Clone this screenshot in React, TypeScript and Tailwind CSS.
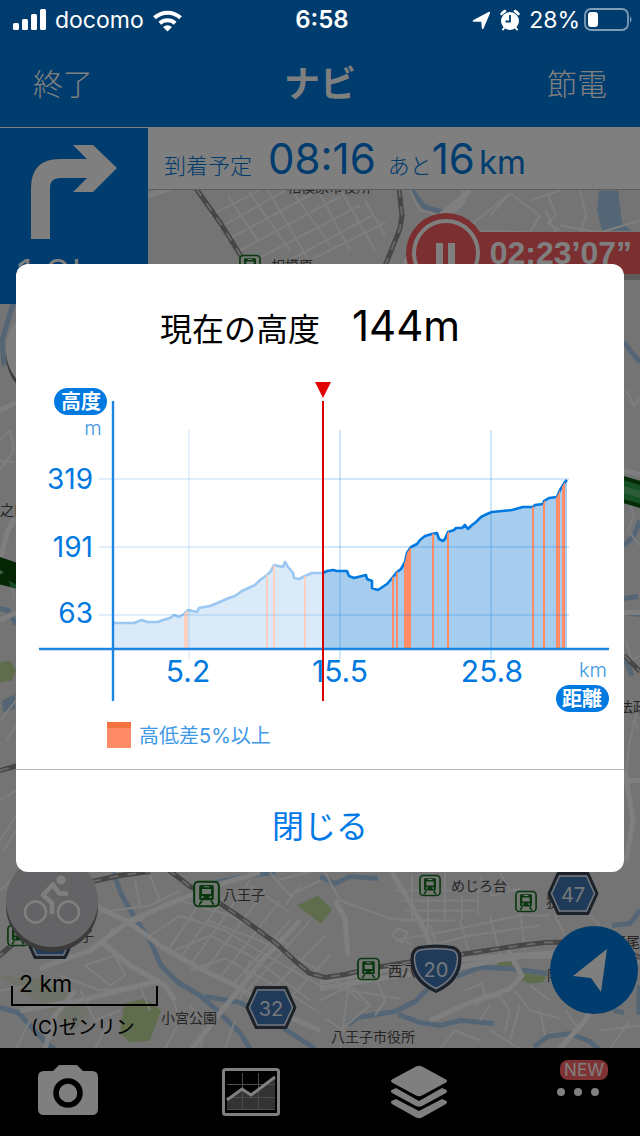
import type {FC, ReactNode} from "react";

type Point = [number, number];
type Span = [number, number];

const BASELINE = 649;
const CURRENT_X = 323;

const passed: Point[] = [
	[112, 623], [128, 623], [134, 623], [139, 621], [142, 620], [147, 622],
	[158, 622], [163, 620], [170, 618], [174, 615], [179, 617], [184, 614],
	[188, 610], [197, 612], [199, 608], [210, 606], [222, 601], [229, 598],
	[235, 596], [242, 591], [255, 585], [260, 580], [267, 575], [271, 571],
	[274, 565], [283, 567], [285, 562], [288, 567], [293, 573], [294, 578],
	[299, 579], [305, 576], [312, 573], [323, 573],
];

const ahead: Point[] = [
	[323, 573], [327, 571], [333, 570], [337, 571], [347, 571], [349, 576],
	[354, 578], [366, 575], [367, 579], [372, 581], [372, 588], [378, 590],
	[387, 584], [393, 577], [397, 572], [401, 569], [405, 562], [407, 553],
	[411, 547], [417, 544], [420, 540], [425, 536], [432, 534], [437, 533],
	[439, 539], [443, 541], [445, 539], [448, 532], [454, 530], [456, 528],
	[462, 528], [465, 525], [468, 529], [472, 525], [476, 522], [481, 517],
	[487, 514], [492, 512], [512, 510], [523, 507], [533, 507], [535, 505],
	[543, 504], [544, 501], [549, 498], [557, 497], [560, 490], [565, 482],
	[567, 480],
];

const passedSlopes: Span[] = [[184, 188], [266, 268], [273, 275], [304, 306]];
const aheadSlopes: Span[] = [
	[392, 394], [396, 398], [404, 411], [432, 434], [447, 449],
	[532, 534], [543, 545], [556, 560], [562, 565],
];

const toLine = (points: Point[]) => points.map((p) => p.join(",")).join(" ");
const toArea = (points: Point[]) =>
	`${points[0][0]},${BASELINE} ${toLine(points)} ${points[points.length - 1][0]},${BASELINE}`;

type ProfileProps = {
	id: string;
	points: Point[];
	slopes: Span[];
	area: string;
	line: string;
	slope: string;
};

const Profile: FC<ProfileProps> = ({id, points, slopes, area, line, slope}) => (
	<g>
		<clipPath id={id}>
			<polygon points={toArea(points)} />
		</clipPath>
		<polygon points={toArea(points)} fill={area} />
		<polyline
			points={toLine(points)}
			fill="none"
			stroke={line}
			strokeWidth="2.600"
			strokeLinejoin="round"
		/>
		<g clipPath={`url(#${id})`}>
			{slopes.map(([from, to]) => (
				<rect
					key={from}
					x={from}
					y="470"
					width={to - from}
					height={BASELINE - 470}
					fill={slope}
				/>
			))}
		</g>
	</g>
);

const ElevationChart: FC = () => (
	<svg
		viewBox="16 376 608 338"
		className="block h-auto w-full"
		role="img"
		aria-label="高度"
	>
		<Profile
			id="passed"
			points={passed}
			slopes={passedSlopes}
			area="#dbeaf8"
			line="#9ac8f2"
			slope="#ffcfc2"
		/>
		<Profile
			id="ahead"
			points={ahead}
			slopes={aheadSlopes}
			area="#a6cdee"
			line="#0079e0"
			slope="#ff8c66"
		/>
		<g stroke="#0079e0" strokeWidth="2">
			<path d="M189 430V659" strokeOpacity=".1" />
			<path d="M340 430V659M491 430V659" strokeOpacity=".18" />
			<path d="M99 479H323M99 547H323M99 615H323" strokeOpacity=".12" />
			<path d="M323 479H569M323 547H569M323 615H569" strokeOpacity=".18" />
		</g>
		<path d="M113 401V701M39 649H609" stroke="#1c86e2" strokeWidth="2.4" />
		<g fill="#0079e0" fontSize="28" textAnchor="end">
			<text x="93" y="489">319</text>
			<text x="93" y="557">191</text>
			<text x="93" y="623">63</text>
		</g>
		<g fill="#0079e0" fontSize="30" textAnchor="middle">
			<text x="188" y="682">5.2</text>
			<text x="340" y="682">15.5</text>
			<text x="492" y="682">25.8</text>
		</g>
		<g fill="#3d98e6" fontSize="20" fontWeight="300" textAnchor="middle">
			<text x="93" y="435">m</text>
			<text x="593" y="677">km</text>
		</g>
		<rect x="54" y="388" width="53" height="27" rx="13.5" fill="#0079e0" />
		<rect x="556" y="685" width="53" height="27" rx="13.5" fill="#0079e0" />
		<g fill="#fff" fontSize="20" fontWeight="700" textAnchor="middle">
			<text x="81" y="409">高度</text>
			<text x="582" y="706">距離</text>
		</g>
		<path d={`M${CURRENT_X} 401V701`} stroke="#d90000" strokeWidth="2" />
		<path d="M315 382H331L323 398Z" fill="#e00000" />
	</svg>
);

const Station: FC<{x: number; y: number; size?: number}> = ({x, y, size = 22}) => (
	<svg x={x} y={y} width={size} height={size} viewBox="0 0 24 24">
		<rect x="1" y="1" width="22" height="22" rx="4" fill="#e4efe4" stroke="#146c20" strokeWidth="1.8" />
		<path
			fillRule="evenodd"
			fill="#146c20"
			d="M7 4h10a1.500 1.500 0 0 1 1.500 1.500V16a1.500 1.500 0 0 1-1.500 1.500H7A1.500 1.500 0 0 1 5.500 16V5.500A1.500 1.500 0 0 1 7 4ZM8 7.500V12h8V7.500ZM9.500 5v1h5V5ZM7.500 14v1.500h2V14ZM14.500 14v1.500h2V14Z"
		/>
		<path d="M8 18L5.500 21.500M16 18l2.500 3.500" stroke="#146c20" strokeWidth="1.600" />
	</svg>
);

const RouteHex: FC<{x: number; y: number; label?: string}> = ({x, y, label}) => (
	<g transform={`translate(${x} ${y})`}>
		<path d="M-15-20H15L24 0 15 20H-15L-24 0Z" fill="#4076b4" stroke="#3a4450" strokeWidth="3" strokeLinejoin="round" />
		<path d="M-13.500-17.500H13.500L21.500 0 13.500 17.500H-13.500L-21.500 0Z" fill="none" stroke="#e8eef5" strokeWidth="1.500" />
		{label && (
			<text y="8" fill="#e8eef5" fontSize="20" textAnchor="middle">
				{label}
			</text>
		)}
	</g>
);

const majorRoads = [
	"M94 905L128 921 160 945 200 968 235 985 280 1012 320 1030",
	"M40 968L90 950 128 921 170 903 215 885 260 872",
	"M192 1048L230 1000 262 960 300 920",
	"M20 1010L80 1000 120 990 160 980",
	"M320 982L370 972 430 962 500 956 560 952 640 962",
	"M320 988L380 978 440 970 520 956 600 955",
	"M100 940L130 965 165 985 175 1000",
	"M45 1048L55 1015 75 990",
	"M392 872L410 902 425 930 434 955",
	"M335 900L345 918 348 955",
	"M400 300L418 250 440 215 470 190",
	"M148 195L170 188M395 300C405 250 420 230 445 215S462 200 464 190",
	"M560 1048L585 1020 605 985",
	"M430 1020L470 1002 510 988 522 975 508 950",
	"M0 560L8 530 16 515M0 410L16 402M0 620L16 612",
	"M624 470L640 474M624 612H640M624 780H640M626 860L633 820 625 770",
];

const minorRoads = [
	"M210 215L260 190M218 228L285 190M226 240L315 192M236 252L340 196M262 256L360 205M285 262L372 215M305 262L385 222",
	"M228 196L258 240M248 190L290 250M268 190L310 262M292 190L330 245M318 190L350 250M342 192L375 250M365 200L385 235",
	"M410 190L420 210 470 222M470 225L510 193 540 215 530 232 470 230M510 193L490 215M530 200L560 190",
	"M548 195L556 215 548 222 560 230M580 190L586 215 578 240M560 225L600 232 640 220M545 210L560 240",
	"M100 912L150 905 180 890M110 930L145 918M135 880L140 905M150 875L160 900",
	"M168 950L215 880M180 958L228 892M190 965L250 880M205 970L265 890M218 980L280 900M232 985L290 920M245 993L310 920M262 1000L325 935M278 1010L330 955",
	"M150 935L180 915 225 930 275 960 320 985M175 950L210 935 250 955 310 1000M180 900L230 915 290 945M190 970L225 958 275 985 320 1012M208 920L260 940 320 970",
	"M85 965L115 955 125 975 110 985ZM60 975L100 990 140 985 150 1010M80 990L95 1020 120 1010M95 1048L110 1020",
	"M170 990L180 1020 165 1048M190 1005L205 1030 200 1048M235 1020L225 1048M250 960L240 1000",
	"M270 872L290 895 320 880M276 880L315 870M250 885L290 912M285 905L300 885M325 872L340 900 390 918 430 920",
	"M395 890H480M400 900H478M405 910H475M400 920H455M412 875V920M428 895V935M445 872V918M462 895V920M478 890V915",
	"M395 940L450 930 520 915 550 915M410 950L470 935 540 925M430 925L440 955M460 920L470 955M490 915L500 955M520 910L525 950",
	"M480 875L492 895 520 888M500 872L510 890M555 915L570 945M580 905L600 925",
	"M392 935L398 928 408 932 402 942ZM405 940L412 945",
	"M320 1000L350 985 370 1005 340 1030M330 975L360 1000M350 975L340 1048M375 975L385 1000 375 1015M325 1018L360 1040M320 985L400 998",
	"M465 990L482 983 485 995 475 1005M480 1000L500 995 510 1010 505 1030M490 1005L480 1020M515 990L530 1010 560 1018M520 1005L510 1040M530 985L550 1000M540 1010L545 1035",
	"M440 1048L455 1030 480 1040M490 1030L520 1048M565 1010L580 1030M600 1030L640 1025M610 1048L630 1020",
	"M0 440L10 430 14 450 0 470M0 460L14 462M0 720L16 700M0 800L16 790M0 840L16 815M4 850L16 830M8 560L14 600M6 740L16 725",
	"M626 390L634 405 640 398M624 490L634 515 628 530 640 545M626 640L632 660 640 655M640 700L630 740 626 770M632 720L638 728",
	"M0 890L16 875M16 1048L30 1020M0 990L30 985",
];

const water = [
	"M113 872L122 895 135 918 150 940 161 965 178 982 200 995 215 1008 240 1032 250 1048",
	"M0 1007L18 1012 30 1025 46 1042 56 1050",
	"M205 996L240 1002 262 1014 290 1032 315 1048",
	"M216 882L250 875 275 872M320 876L335 883 350 876 378 878",
	"M348 1024L358 1017 395 1011 415 1001 428 988",
	"M398 1014L420 1022 440 1025 460 1020 494 1023",
	"M456 976L480 967 510 968 548 973",
	"M534 1046L548 1036 570 1033 590 1041 600 1050",
	"M612 925L630 923 640 910M614 1010L624 1012M639 985V1014",
	"M412 190L424 206 447 213 447 222",
	"M14 300L2 340 4 365M0 608L8 610 16 624M624 342L640 362M624 545L634 535 640 520",
	"M624 598L638 596M624 612L640 614M626 660L632 675M610 290L616 276",
];

const rails = [
	"M196 188L220 222 245 262",
	"M399 188L402 215 400 228 384 268",
	"M92 881L120 875 150 871M168 869L190 886 220 903 245 920 275 942 297 962 310 973 325 977 345 974 370 968 400 963 440 957 480 951 520 945 545 942 600 941 640 957",
	"M-4 958L22 936M0 770L18 765M624 655L640 671",
];

const MapCanvas: FC = () => (
	<svg
		viewBox="0 127 640 921"
		preserveAspectRatio="xMidYMid slice"
		className="absolute inset-0 h-full w-full"
		aria-hidden="true"
	>
		<rect y="127" width="640" height="921" fill="#e9e9e9" />
		<g fill="#bfdb9b">
			<path d="M124 1003L145 998 161 1010 150 1040 130 1042 120 1033Z" />
			<path d="M297 905L318 895 332 909 321 923Z" />
			<path d="M498 961H512V967H497ZM518 972L546 975 543 982 530 983 520 979Z" />
			<path d="M0 662L10 660 16 670 12 680 0 682Z" />
			<path opacity=".3" d="M0 975L45 978 90 1010 75 1030 30 995Z" />
		</g>
		<path d="M599 190H618L622 222 631 230H602L597 210Z" fill="#a9cdec" />
		<path d="M2 700L15 694V708L3 712Z" fill="#a9cdec" />
		<g fill="none" stroke="#a9cdec" strokeWidth="5" strokeLinejoin="round">
			{water.map((d) => (
				<path key={d} d={d} />
			))}
		</g>
		<g fill="none" stroke="#fdfdfd" strokeWidth="2" strokeLinejoin="round">
			{minorRoads.map((d) => (
				<path key={d} d={d} />
			))}
		</g>
		<g fill="none" stroke="#fff" strokeWidth="5" strokeLinejoin="round">
			{majorRoads.map((d) => (
				<path key={d} d={d} />
			))}
		</g>
		{rails.map((d) => (
			<g key={d} fill="none">
				<path d={d} stroke="#8c8c8c" strokeWidth="5" />
				<path d={d} stroke="#d0d0d0" strokeWidth="2" strokeDasharray="9 9" />
			</g>
		))}
		<path d="M620 488L644 495" stroke="#0a5a0a" strokeWidth="26" />
		<path d="M620 488L644 495" stroke="#2c9c4a" strokeWidth="18" />
		<path d="M620 488L644 495" stroke="#5cb870" strokeWidth="7" />
		<path d="M-4 555L16 562V588L-4 583Z" fill="#0a4a0a" />
		<path d="M0 569L4 572 0 574Z" fill="#7cb888" />
		<path d="M9 580L16 584V588L10 586Z" fill="#2c9c4a" />
		<Station x={239} y={254} />
		<Station x={193} y={880} size={27} />
		<Station x={419} y={874} />
		<Station x={515} y={890} />
		<Station x={357} y={957} size={23} />
		<Station x={7} y={924} />
		<g fill="#4c4c4c" fontSize="14" stroke="#e9e9e9" strokeWidth="2" paintOrder="stroke">
			<text x="287" y="191">相模原市役所</text>
			<text x="271" y="270">相模原</text>
			<text x="223" y="899">八王子</text>
			<text x="451" y="890">めじろ台</text>
			<text x="546" y="906">狭</text>
			<text x="388" y="975">西八</text>
			<text x="612" y="946">高尾</text>
			<text x="547" y="979">陣</text>
			<text x="161" y="1022">小宮公園</text>
			<text x="331" y="1041">八王子市役所</text>
			<text x="0" y="514">之口</text>
			<text x="619" y="711">法政</text>
			<text x="66" y="940">王子</text>
		</g>
		<RouteHex x={573} y={893} label="47" />
		<RouteHex x={271} y={1007} label="32" />
		<RouteHex x={50} y={937} />
		<g transform="translate(436 968)">
			<path
				d="M-17-21Q0-24 17-21 24-19 24-10 24 12 0 23-24 12-24-10-24-19-17-21Z"
				fill="#4076b4"
				stroke="#3a4450"
				strokeWidth="3"
			/>
			<path
				d="M-16-18.500Q0-21 16-18.500 21.500-17 21.500-10 21 10 0 20-21 10-21.500-10-21.500-17-16-18.500Z"
				fill="none"
				stroke="#e8eef5"
				strokeWidth="1.500"
			/>
			<text y="8" fill="#e8eef5" fontSize="20" textAnchor="middle">20</text>
		</g>
	</svg>
);

const StatusBar: FC = () => (
	<div className="relative z-20 grid h-10 grid-cols-3 items-center pr-2 pl-3 text-[23px] text-white">
		<div className="flex items-center gap-2">
			<svg width="35" height="22" viewBox="0 0 35 22" fill="#fff" aria-hidden="true">
				<rect x="1" y="14" width="6" height="7" rx="1.500" />
				<rect x="10" y="10" width="6" height="11" rx="1.500" />
				<rect x="19" y="5" width="6" height="16" rx="1.500" />
				<rect x="28" y="0" width="6" height="21" rx="1.500" />
			</svg>
			<span>docomo</span>
			<svg width="31" height="23" viewBox="0 0 31 23" aria-hidden="true">
				<g fill="none" stroke="#fff" strokeWidth="4">
					<path d="M2.500 8.800A19 19 0 0 1 28.500 8.800" />
					<path d="M7.800 14.200A11.500 11.500 0 0 1 23.200 14.200" />
				</g>
				<path d="M15.500 22.500L11 18Q15.500 14.500 20 18Z" fill="#fff" />
			</svg>
		</div>
		<span className="text-center text-2xl font-semibold">6:58</span>
		<div className="flex items-center justify-end gap-1">
			<svg width="19" height="19" viewBox="0 0 19 19" aria-hidden="true">
				<path d="M1 9.200L16.500 1Q18.600.2 18 2.200L11.500 17.500Q10.300 19 9.800 17.200L9.300 10.800 1.800 10.800Q-.2 10.300 1 9.200Z" fill="#fff" />
			</svg>
			<svg className="mx-1" width="22" height="22" viewBox="0 0 22 22" aria-hidden="true">
				<circle cx="11" cy="12" r="9" fill="#fff" />
				<path d="M2.500 5A12 12 0 0 1 6 2M16 2A12 12 0 0 1 19.500 5" stroke="#fff" strokeWidth="2.600" strokeLinecap="round" />
				<path d="M5.500 18.500L4 20.500M16.500 18.500L18 20.500" stroke="#fff" strokeWidth="2" strokeLinecap="round" />
				<path d="M11 6V12.500H6.500" fill="none" stroke="#003c6e" strokeWidth="1.800" />
			</svg>
			<span>28%</span>
			<svg width="48" height="24" viewBox="0 0 48 24" aria-hidden="true">
				<rect x="1" y="1" width="43" height="21" rx="6" fill="none" stroke="#7f9db6" strokeWidth="1.800" />
				<rect x="4" y="4" width="10" height="15" rx="3" fill="#fff" />
				<path d="M46 8Q49 11.500 46 15Z" fill="#7f9db6" />
			</svg>
		</div>
	</div>
);

const TabButton: FC<{label: string; className?: string; children: ReactNode}> = ({
	label,
	className = "",
	children,
}) => (
	<button
		type="button"
		aria-label={label}
		className={`flex flex-col items-center justify-center ${className}`}
	>
		{children}
	</button>
);

const TabBar: FC = () => (
	<nav className="grid h-[88px] grid-cols-[136fr_230fr_106fr_168fr] bg-black">
		<TabButton label="カメラ" className="pb-1">
			<svg width="60" height="50" viewBox="0 0 60 50" aria-hidden="true">
				<path d="M6 6H15L20 1Q21 0 22 0H38Q39 0 40 1L45 6H54Q60 6 60 12V44Q60 50 54 50H6Q0 50 0 44V12Q0 6 6 6Z" fill="#fff" />
				<circle cx="30" cy="28" r="12" fill="#fff" stroke="#000" strokeWidth="5.500" />
			</svg>
		</TabButton>
		<TabButton label="グラフ">
			<svg width="58" height="48" viewBox="0 0 58 48" aria-hidden="true">
				<rect x="1.500" y="1.500" width="55" height="45" rx="2" fill="none" stroke="#fff" strokeWidth="3" />
				<path d="M5 32L20 21 29 27 53 9V42H5Z" fill="#666" />
				<path d="M20.500 5V42M36.500 5V42M5 16.500H53M5 29.500H53M5 41.500H53" stroke="#999" strokeWidth="1" />
				<path d="M5 32L20 21 29 27 53 9" fill="none" stroke="#fff" strokeWidth="3" />
			</svg>
		</TabButton>
		<TabButton label="地図レイヤー">
			<svg width="58" height="54" viewBox="0 0 58 54" fill="#fff" aria-hidden="true">
				<path d="M26 1.500Q29 0 32 1.500L56 14.500Q58 16 56 17.500L32 30.500Q29 32 26 30.500L2 17.500Q0 16 2 14.500Z" />
				<path d="M1.500 25L6 23 29 36 52 23 56.500 25Q58 26.500 56 28L32 41Q29 42.500 26 41L2 28Q0 26.500 1.500 25Z" />
				<path d="M1.500 36L6 34 29 46 52 34 56.500 36Q58 37.500 56 39L32 52.500Q29 54 26 52.500L2 39Q0 37.500 1.500 36Z" />
			</svg>
		</TabButton>
		<TabButton label="メニュー" className="gap-2 pb-7 pl-14">
			<span className="rounded-lg bg-[#ff6468] px-1 text-[17px] leading-5 text-white">
				NEW
			</span>
			<svg className="mr-3" width="44" height="8" viewBox="0 0 44 8" fill="#fff" aria-hidden="true">
				<circle cx="5" cy="4" r="4" />
				<circle cx="22" cy="4" r="4" />
				<circle cx="39" cy="4" r="4" />
			</svg>
		</TabButton>
	</nav>
);

const App: FC = () => {
	return (
		<div className="relative flex min-h-screen flex-col font-['Inter','Noto_Sans_CJK_JP',sans-serif]">
			<header className="border-b border-white bg-[#0078dc]">
				<StatusBar />
				<div className="grid h-[87px] grid-cols-3 items-center px-[33px] text-white">
					<button type="button" className="justify-self-start text-3xl font-light">
						終了
					</button>
					<h1 className="text-center text-4xl font-bold">ナビ</h1>
					<button type="button" className="justify-self-end text-3xl font-light">
						節電
					</button>
				</div>
			</header>
			<main className="relative flex-1 overflow-hidden">
				<MapCanvas />
				<div className="relative flex items-start">
					<div className="flex h-44 w-[148px] flex-col bg-[#0078dc] px-4 pt-4 text-white">
						<svg className="ml-3" width="92" height="96" viewBox="0 0 92 96" aria-hidden="true">
							<path d="M3 95V44Q3 15 32 15H59L45 1H65L89 24 65 48H45L59 34H32Q22 34 22 44V95Z" fill="#fff" />
						</svg>
						<span className="mt-2 text-[44px] leading-[54px] font-light">1.3km</span>
					</div>
					<div className="flex h-[62px] flex-1 items-baseline border-b border-[#bbb] bg-white px-4 text-[#0078dc]">
						<span className="mr-4 text-[22px] font-light">到着予定</span>
						<span className="mr-3 text-[42px] leading-[62px]">08:16</span>
						<span className="text-[22px] font-light">あと</span>
						<span className="mr-1 text-[42px] leading-[62px]">16</span>
						<span className="text-[33px] leading-[62px]">km</span>
					</div>
				</div>
				<button
					type="button"
					aria-label="一時停止"
					className="absolute top-[85px] right-0 flex items-center font-['Liberation_Sans',sans-serif] text-[32px] font-bold text-white"
				>
					<svg className="relative z-10 -mr-3" width="80" height="80" viewBox="0 0 80 80" aria-hidden="true">
						<circle cx="40" cy="40" r="40" fill="#f85e62" />
						<circle cx="40" cy="40" r="32" fill="none" stroke="#fff" strokeWidth="4" />
						<path d="M30 30h7v24h-7zM42 30h7v24h-7z" fill="#fff" />
					</svg>
					<span className="bg-[#f85e62] pr-2 pl-4 leading-[42px] shadow-[0_6px_0_#0003]">02:23’07”</span>
				</button>
				<button
					type="button"
					aria-label="コンパス"
					className="absolute top-[176px] left-[6px] size-[92px] rounded-full bg-white shadow-[0_5px_0_#777]"
				/>
				<button
					type="button"
					aria-label="自転車"
					className="absolute bottom-[101px] left-[6px] flex size-[92px] items-center justify-center rounded-full bg-[#c8c8cc] shadow-[0_5px_0_#777]"
				>
					<svg width="58" height="52" viewBox="0 0 58 52" aria-hidden="true">
						<circle cx="12.500" cy="37" r="10.500" fill="none" stroke="#fff" strokeWidth="2.500" />
						<circle cx="45.500" cy="37" r="10.500" fill="none" stroke="#fff" strokeWidth="2.500" />
						<circle cx="38" cy="5" r="4.500" fill="#fff" />
						<path d="M29 39V28L20 20 30 9.500 36 18.500H45" fill="none" stroke="#fff" strokeWidth="4.500" strokeLinejoin="round" />
					</svg>
				</button>
				<button
					type="button"
					aria-label="現在地"
					className="absolute right-[2px] bottom-[34px] flex size-[88px] items-center justify-center rounded-full bg-[#0078dc]"
				>
					<svg width="44" height="48" viewBox="0 0 44 48" aria-hidden="true">
						<path d="M35 3L1 30 19 32 29 46Z" fill="#fff" />
					</svg>
				</button>
				<div className="absolute bottom-1.5 left-[11px] w-[147px] text-black">
					<div className="flex h-5 items-end border-2 border-t-0 border-black px-1.5 pb-2 text-[23px] leading-6">
						2 km
					</div>
					<p className="mt-2 pl-5 text-[19px] leading-7">(C)ゼンリン</p>
				</div>
			</main>
			<TabBar />
			<div className="absolute inset-0 z-10 flex items-center justify-center bg-black/50 px-4">
				<section
					role="dialog"
					aria-modal="true"
					aria-labelledby="elevation"
					className="w-full rounded-xl bg-white"
				>
					<h2
						id="elevation"
						className="flex h-28 items-baseline justify-center gap-8 pt-1.5 pr-5 text-[32px] leading-[112px] font-normal text-black"
					>
						現在の高度
						<span className="text-[42px]">144m</span>
					</h2>
					<ElevationChart />
					<div className="flex h-14 items-start gap-2 border-b border-[#b5b5b5] pt-2 pl-[91px] text-xl leading-7 text-[#3d98e6]">
						<span className="h-[26px] w-6 border-t-6 border-[#f27340] bg-[#ff8c66]" />
						高低差5%以上
					</div>
					<button
						type="button"
						className="h-[102px] w-full pt-3 text-[32px] text-[#0079e8]"
					>
						閉じる
					</button>
				</section>
			</div>
		</div>
	);
};

export default App;
